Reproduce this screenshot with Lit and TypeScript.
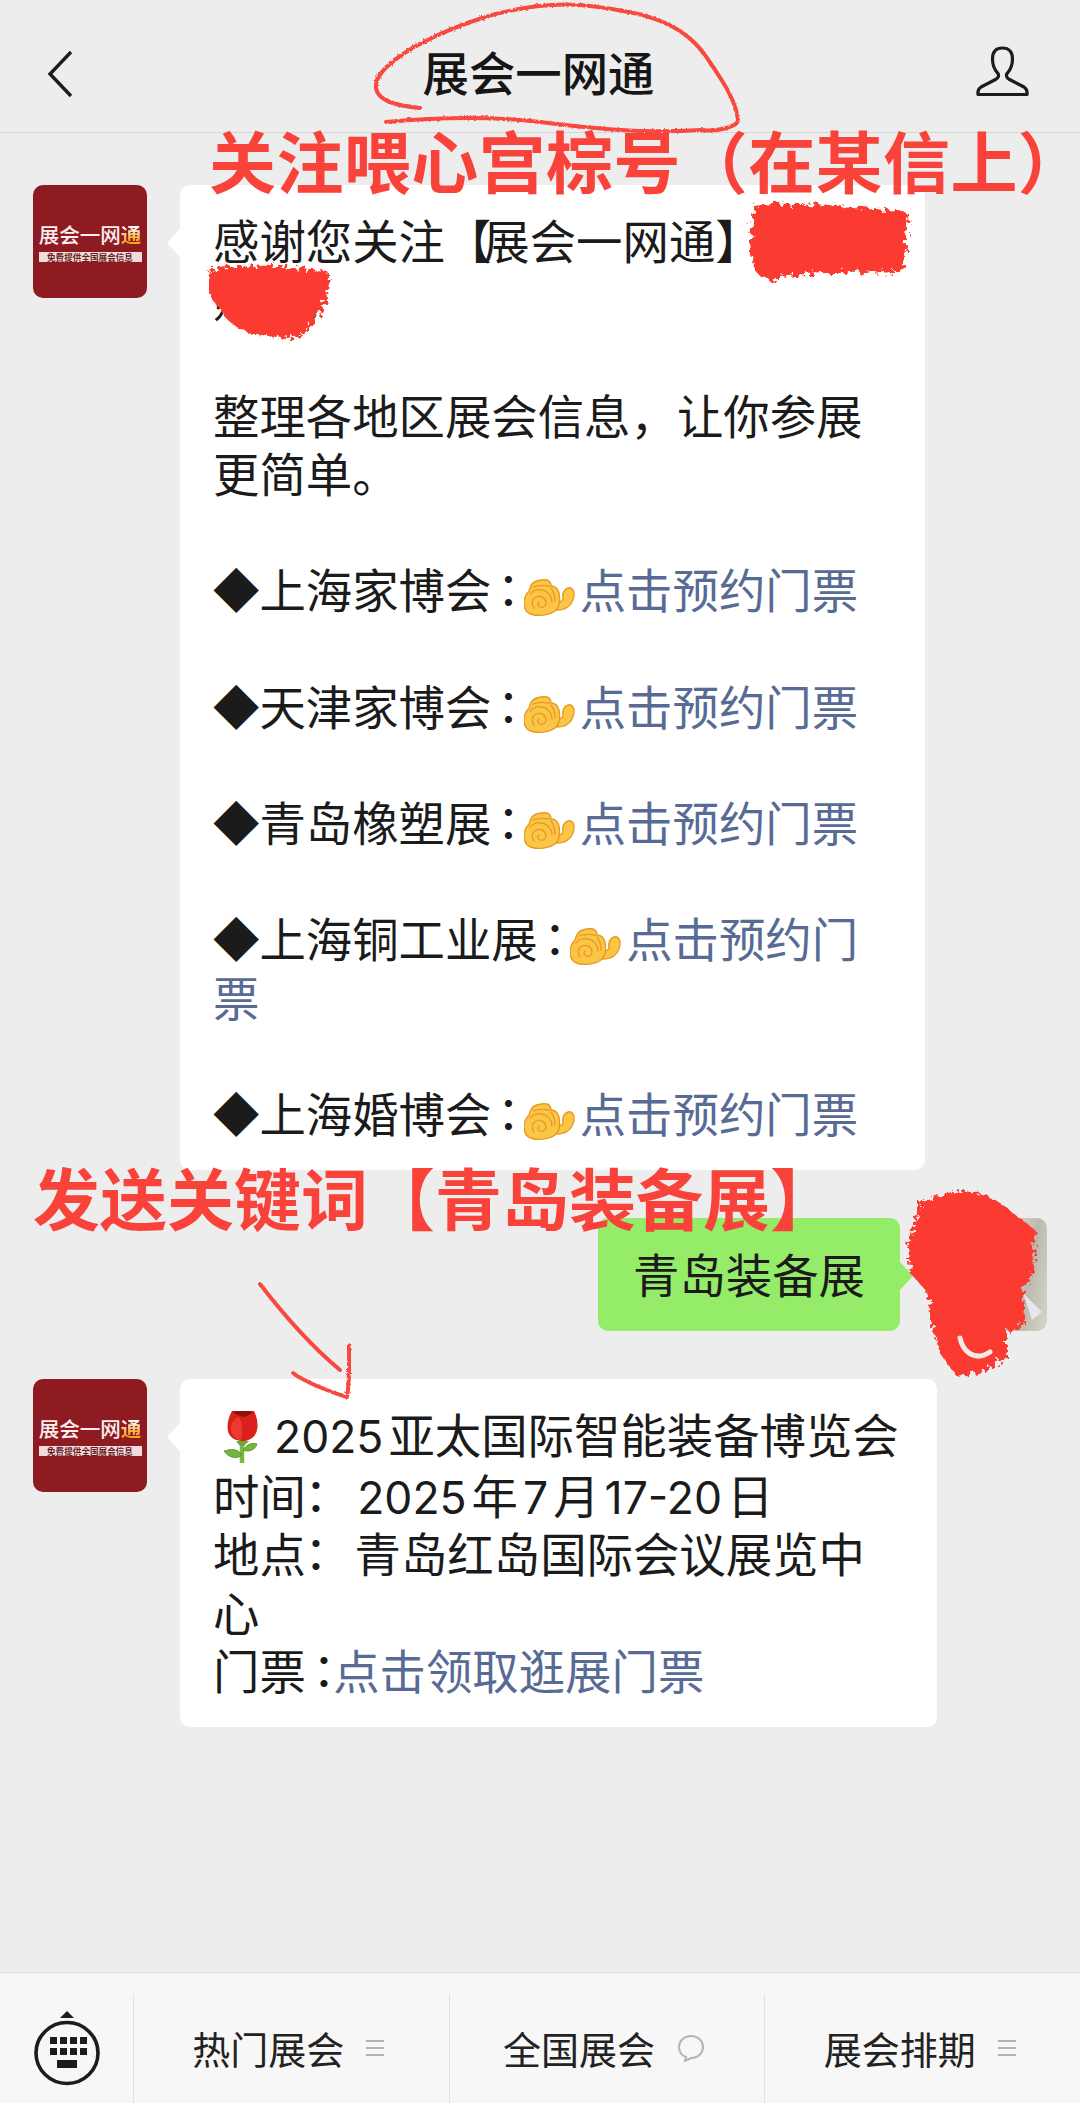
import { LitElement, html, css, svg } from "lit";
import { customElement } from "lit/decorators.js";

const hand = html`<svg class="hand" viewBox="0 0 52 38">
  <path d="M34 24c3 0 5-1 5-4-1-4 1-9 5-10 4-1 7 3 6 8-1 6-4 10-8 12-3 2-6 2-9 2Z" fill="#fbc547" stroke="#e99a20" stroke-width="1.4"/>
  <path d="M8 6c2-3 10-5 15-4 3 1 4 4 4 6 4 0 7 3 8 7 1 6 1 14-4 18-5 4-15 5-21 4-7-1-10-5-10-12 0-5 2-9 5-12 1-2 1-5 3-7Z" fill="#fbc547" stroke="#e99a20" stroke-width="1.4"/>
  <path d="M9 9c5-2 11-2 16-1M6 16c3-3 8-5 12-4 6 1 10 6 10 12M10 30c-3-4-2-9 2-11 5-2 10 1 10 6 0 3-3 5-6 4-2-1-3-3-1-5M27 10c3 4 4 8 4 13" fill="none" stroke="#e99a20" stroke-width="1.3" stroke-linecap="round"/>
</svg>`;

const rose = html`<svg class="rose" viewBox="0 0 54 54">
  <path d="M27 31v21" stroke="#7cb83e" stroke-width="4.5"/>
  <path d="M27 44C22 37 16 38 9 40c4 6 12 9 18 4Z" fill="#76b53b" stroke="#4c8d25" stroke-width=".8"/>
  <path d="M28 39c3-5 9-8 14-6-1 5-8 9-14 6Z" fill="#76b53b" stroke="#4c8d25" stroke-width=".8"/>
  <path d="M21 30h13l-5 5h-4Z" fill="#6aa838"/>
  <path d="M17 0h22c4 8 5 18 1 24-3 4-8 6-12 6-6 0-11-2-14-7-3-7-1-16 3-23Z" fill="#d8201c"/>
  <path d="M18 1c6-2 14-2 20 0-3 3-6 4-9 5-4-1-8-2-11-5Z" fill="#8f1010"/>
  <path d="M24 6c3 5 4 14 2 23-7-1-11-7-10-14 1-4 4-8 8-9Z" fill="#ee3a2e"/>
</svg>`;

const fist = html`<span class="cc list">：</span>${hand}`;
const link = (t: string) => html`<span class="link">${t}</span>`;
const n = (t: string) => html`<span class="num">${t}</span>`;

const menu = html`<svg class="ico" viewBox="0 0 18 18"><path d="M0 2h18M0 9h18M0 16h18" stroke="#b4b4b4" stroke-width="2"/></svg>`;

@customElement("app-avatar")
class AppAvatar extends LitElement {
  static styles = css`
    :host { display: flex; flex: none; flex-direction: column; align-items: center; justify-content: center; width: 114px; height: 113px; border-radius: 10px; background: #8f1b22; font-family: "Noto Sans CJK SC", sans-serif; }
    .name { display: flex; color: #fbeeee; font-size: 20.5px; line-height: 24px; font-weight: 500; }
    .gold { background: linear-gradient(#fff 20%, #f2a71e 75%); -webkit-background-clip: text; background-clip: text; color: transparent; font-weight: 700; }
    .tag { margin-top: 6px; width: 103px; height: 10px; background: #f0dcdc; color: #6d1a1e; font-size: 8.6px; line-height: 10px; font-weight: 700; text-align: center; white-space: nowrap; overflow: hidden; }
  `;
  render() {
    return html`<div class="name">展会一网<span class="gold">通</span></div><div class="tag">免费提供全国展会信息</div>`;
  }
}

@customElement("app-root")
class AppRoot extends LitElement {
  static styles = css`
    :host { display: block; position: relative; width: 1080px; height: 2103px; overflow: hidden; background: #ededed; color: #1b1b1b; font-family: "Noto Sans CJK SC", sans-serif; }
    .page { display: flex; flex-direction: column; height: 2103px; }
    .head { flex: none; display: grid; grid-template-columns: 1fr auto 1fr; align-items: start; box-sizing: border-box; height: 133px; padding: 44px 50px 0 47px; border-bottom: 1px solid #d6d6d6; }
    .back { width: 26px; height: 48px; margin-top: 6px; }
    .title { font-size: 46.4px; line-height: 54px; font-weight: 500; color: #161616; }
    .me { width: 54px; height: 51px; margin-top: 2px; justify-self: end; }
    .chat { flex: 1; display: flex; flex-direction: column; gap: 48px; padding: 52px 33px 0; }
    .row { display: flex; gap: 33px; align-items: flex-start; }
    .row.mine { justify-content: flex-end; gap: 34px; }
    .bubble { position: relative; box-sizing: border-box; background: #fff; border-radius: 10px; padding: 25px 35px 29px 33px; font-size: 46.4px; line-height: 58.2px; }
    .b1 { width: 745px; }
    .b3 { width: 757px; }
    .bubble::before { content: ""; position: absolute; left: -13px; top: 44px; border: 14px solid transparent; border-left: 0; border-right: 13px solid #fff; }
    .green { background: #95ec69; width: 302px; height: 113px; padding: 26px 35px; }
    .green::before { left: auto; right: -13px; border: 14px solid transparent; border-right: 0; border-left: 13px solid #95ec69; }
    .photo { flex: none; width: 113px; height: 113px; border-radius: 10px; background: linear-gradient(100deg, #dcdccf 55%, #bdb9ae 80%, #d6d6c8); }
    .link { color: #576b95; }
    .num { font-family: Inter, "Noto Sans CJK SC", sans-serif; margin: 0 5px; font-size: 44.5px; line-height: 1; }
    .cc { font-family: "Noto Sans CJK TC", sans-serif; line-height: 1; }
    .cc.time { margin: 0 13px 0 -13px; }
    .cc.place { margin: 0 5px 0 -13px; }
    .cc.list { margin: 0 -10px 0 -6px; }
    .cc.tick { margin: 0 -14px 0 -5px; }
    .br1 { letter-spacing: -8px; }
    .hand { display: inline-block; width: 52px; height: 38px; vertical-align: -8px; margin: 0 4px 0 2px; }
    .rose { display: inline-block; width: 54px; height: 54px; vertical-align: -12px; margin-left: 2px; }
    .bar { flex: none; display: flex; box-sizing: border-box; height: 131px; padding-top: 21px; background: #f7f7f7; border-top: 1px solid #dcdcdc; }
    .kb { flex: none; width: 133px; display: flex; justify-content: center; align-items: flex-start; }
    .kb svg { width: 68px; height: 78px; margin-top: 17px; }
    .tab { flex: 1; display: flex; align-items: flex-start; justify-content: center; gap: 22px; padding: 32px 6px 0 0; border-left: 1px solid #e2e2e2; font-size: 38px; line-height: 44px; color: #222; }
    .ico { width: 18px; height: 18px; margin-top: 13px; }
    .ico.say { width: 28px; height: 28px; margin-top: 8px; }
    .note { position: absolute; margin: 0; font-size: 67px; line-height: 67px; font-weight: 700; color: #f8423a; white-space: nowrap; }
    .n1 { left: 209px; top: 125px; letter-spacing: .4px; }
    .n2 { left: 33px; top: 1162px; }
    .ink { position: absolute; left: 0; top: 0; width: 1080px; height: 2103px; pointer-events: none; }
  `;

  render() {
    return html`
      <div class="page">
        <header class="head">
          <svg class="back" viewBox="0 0 26 48"><path d="M24 2 3 24l21 22" fill="none" stroke="#1c1c1c" stroke-width="3.4"/></svg>
          <div class="title">展会一网通</div>
          <svg class="me" viewBox="0 0 54 51"><path d="M26.5 2C20 2 16.5 6 16.5 13c0 6 1.5 10 5 14 2 2 1 5-2 6.5L5 41c-3 2-3.5 4-3 7.5h49c.5-3.5 0-5.5-3-7.5l-14.5-7.5c-3-1.5-4-4.5-2-6.5 3.5-4 5-8 5-14C36.5 6 33 2 26.5 2Z" fill="none" stroke="#1c1c1c" stroke-width="3.2" stroke-linejoin="round"/></svg>
        </header>
        <main class="chat">
          <div class="row">
            <app-avatar></app-avatar>
            <div class="bubble b1">
              感谢您关注<span class="br1">【</span>展会一网通】公众<br>账号!<br><br>
              整理各地区展会信息，让你参展更简单。<br><br>
              ◆上海家博会${fist}${link("点击预约门票")}<br><br>
              ◆天津家博会${fist}${link("点击预约门票")}<br><br>
              ◆青岛橡塑展${fist}${link("点击预约门票")}<br><br>
              ◆上海铜工业展${fist}${link("点击预约门票")}<br><br>
              ◆上海婚博会${fist}${link("点击预约门票")}
            </div>
          </div>
          <div class="row mine">
            <div class="bubble green">青岛装备展</div>
            <div class="photo"></div>
          </div>
          <div class="row">
            <app-avatar></app-avatar>
            <div class="bubble b3">
              ${rose}${n("2025")}亚太国际智能装备博览会<br>
              时间<span class="cc time">：</span>${n("2025")}年${n("7")}月${n("17-20")}日<br>
              地点<span class="cc place">：</span> 青岛红岛国际会议展览中心<br>
              门票<span class="cc tick">：</span>${link("点击领取逛展门票")}
            </div>
          </div>
        </main>
        <footer class="bar">
          <div class="kb">
            <svg viewBox="0 0 68 78">
              <path d="M34 0l7 7H27Z" fill="#1c1c1c"/>
              <ellipse cx="34" cy="42" rx="31" ry="30.5" fill="none" stroke="#1c1c1c" stroke-width="3.6"/>
              <path d="M17 26h7v7h-7ZM27 26h7v7h-7ZM37 26h7v7h-7ZM47 26h7v7h-7ZM17 37h7v7h-7ZM27 37h7v7h-7ZM37 37h7v7h-7ZM47 37h7v7h-7ZM24 49h20v8H24Z" fill="#1c1c1c"/>
            </svg>
          </div>
          <div class="tab">热门展会${menu}</div>
          <div class="tab">全国展会<svg class="ico say" viewBox="0 0 28 28"><path d="M14 2C7 2 2 7 2 13c0 5 3 9 7 10l-1 4 6-3c7 0 12-5 12-11S21 2 14 2Z" fill="none" stroke="#b4b4b4" stroke-width="2"/></svg></div>
          <div class="tab">展会排期${menu}</div>
        </footer>
      </div>
      <p class="note n1">关注喂心宫棕号（在某信上）</p>
      <p class="note n2">发送关键词【青岛装备展】</p>
      <svg class="ink" viewBox="0 0 1080 2103">
        ${svg`
        <defs>
          <filter id="rough" x="-10%" y="-10%" width="120%" height="120%">
            <feTurbulence type="fractalNoise" baseFrequency="0.2" numOctaves="3" seed="4"/>
            <feDisplacementMap in="SourceGraphic" scale="14"/>
          </filter>
          <filter id="fine" x="-5%" y="-5%" width="110%" height="110%">
            <feTurbulence type="fractalNoise" baseFrequency="0.35" numOctaves="2" seed="7"/>
            <feDisplacementMap in="SourceGraphic" scale="3"/>
          </filter>
        </defs>
        <path d="M1023 1293 1042 1312 1032 1320Z" fill="#e6e6ee"/>
        <g fill="none" stroke="#f8493f" stroke-width="4" stroke-linecap="round" stroke-linejoin="round" filter="url(#fine)">
          <path d="M420 108C400 106 378 102 376 88 374 70 410 42 482 18 520 6 560 2 590 6 640 12 680 20 705 55 722 80 736 100 738 120 738 126 720 132 700 130 640 134 590 128 540 122 490 116 430 118 386 122"/>
          <path d="M260 1284C280 1310 310 1345 340 1370M349 1345C349 1365 350 1380 347 1397 330 1392 305 1382 293 1373"/>
        </g>
        <g fill="#fb3b30" filter="url(#rough)">
          <path d="M754 206C790 200 860 208 908 212 910 232 904 250 902 272 860 274 800 270 770 280 752 280 748 250 752 232Z"/>
          <path d="M210 270C240 262 300 266 328 272 332 296 320 320 300 336 270 342 228 332 222 310 208 300 206 284 210 270Z"/>
          <path fill-rule="evenodd" d="M957 1190C975 1192 990 1196 1000 1203L1035 1230 1033 1273 1023 1290 1025 1323 1007 1333 1007 1357 983 1372 957 1377 940 1353 933 1330 928 1293 910 1273 908 1247 915 1220 920 1203Z"/>
        </g>
        <path d="M960 1338C963 1352 975 1362 990 1352" fill="none" stroke="#f4e9e6" stroke-width="5" stroke-linecap="round"/>
        `}
      </svg>
    `;
  }
}
void AppAvatar; void AppRoot;
